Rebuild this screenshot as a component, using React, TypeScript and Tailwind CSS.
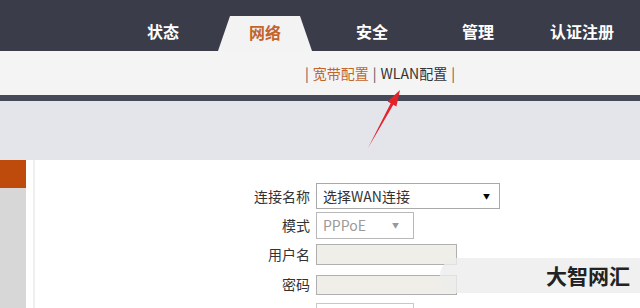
import React from 'react';

const font = {fontFamily: '"Noto Sans CJK SC", "Noto Sans", sans-serif'};

const navItems = [
    {label: '状态', w: 'w-[106px]'},
    {label: '网络', w: 'w-[94px]', active: true},
    {label: '安全', w: 'w-[120px]'},
    {label: '管理', w: 'w-[92px]'},
    {label: '认证注册', w: 'w-[116px]'},
];

const TopNav: React.FC = () => (
    <div className="flex h-[51px] items-end bg-[#3a3c49] pl-[110px]">
        {navItems.map((item) =>
            item.active ? (
                <div key={item.label}
                     className={`${item.w} ml-[2px] flex h-[35px] items-center justify-center bg-[#f3f3f3] pb-[4px] text-[16px] font-bold text-[#c3652b] [clip-path:polygon(12px_0,82px_0,94px_100%,0_100%)]`}>
                    {item.label}
                </div>
            ) : (
                <div key={item.label}
                     className={`${item.w} flex h-[51px] items-center justify-center pt-[10px] text-[16px] font-bold text-white`}>
                    {item.label}
                </div>
            )
        )}
    </div>
);

const SubNav: React.FC = () => (
    <div className="flex h-[44px] items-center bg-[#f4f4f4] pl-[305px] text-[14px] text-[#333]">
        <span className="text-[#555]">|</span>
        <span className="mx-[4px] text-[#c3652b]">宽带配置</span>
        <span className="text-[#555]">|</span>
        <span className="mx-[4px]">WLAN配置</span>
        <span className="text-[#555]">|</span>
    </div>
);

const Row: React.FC<{label?: string; className?: string; children: React.ReactNode}> = ({label, className, children}) => (
    <div className={`flex items-center ${className ?? ''}`}>
        <div className="w-[281px] pr-[6px] text-right text-[14px] text-[#333]">{label}</div>
        {children}
    </div>
);

const Arrow: React.FC = () => (
    <svg className="pointer-events-none absolute left-0 top-0" width="640" height="308">
        <polygon
            points="400,90 396.4,106.5 393.3,104.7 368,148 390.7,103.3 387.6,101.6"
            fill="#e3222b"
        />
    </svg>
);

export default function App() {
    return (
        <div className="relative h-[308px] w-[640px] overflow-hidden bg-white" style={font}>
            <TopNav/>
            <SubNav/>
            <div className="h-[6px] bg-[#464957]"/>
            <div className="h-[59px] bg-[#e4e5ea]"/>
            <div className="flex h-[148px]">
                <div className="w-[26px] bg-[#d7d7d7]">
                    <div className="h-[28px] bg-[#be4a0c]"/>
                </div>
                <div className="w-[7px] bg-white"/>
                <div className="w-[2px] bg-[#efefef]"/>
                <div className="flex flex-1 flex-col pt-[23px]">
                    <Row label="连接名称">
                        <div className="flex h-[26px] w-[184px] items-center justify-between border border-[#a9a9a9] bg-white pl-[6px] pr-[9px] text-[14px] text-[#333]">
                            <span>选择WAN连接</span>
                            <span className="text-[7px] text-black">▼</span>
                        </div>
                    </Row>
                    <Row label="模式" className="mt-[3px]">
                        <div className="flex h-[27px] w-[98px] items-center justify-between border border-[#b8b8b8] bg-white pl-[6px] pr-[14px] text-[14px] text-[#9a9a9a]">
                            <span>PPPoE</span>
                            <span className="text-[7px] text-[#999]">▼</span>
                        </div>
                    </Row>
                    <Row label="用户名" className="mt-[5px]">
                        <div className="h-[21px] w-[141px] border border-[#b0b0b0] bg-[#efeee9]"/>
                    </Row>
                    <Row label="密码" className="mt-[9px]">
                        <div className="h-[20px] w-[141px] border border-[#b0b0b0] bg-[#efeee9]"/>
                    </Row>
                    <Row className="mt-[8px]">
                        <div className="h-[22px] w-[98px] border border-[#c8c8c8] bg-white"/>
                    </Row>
                </div>
            </div>
            <div className="absolute right-0 top-[258px] flex h-[35px] w-[200px] items-center justify-end rounded-l-full bg-[#ececec]/80 pr-[10px]">
                <span className="text-[21px] font-bold text-[#222]">大智网汇</span>
            </div>
            <Arrow/>
        </div>
    );
}
